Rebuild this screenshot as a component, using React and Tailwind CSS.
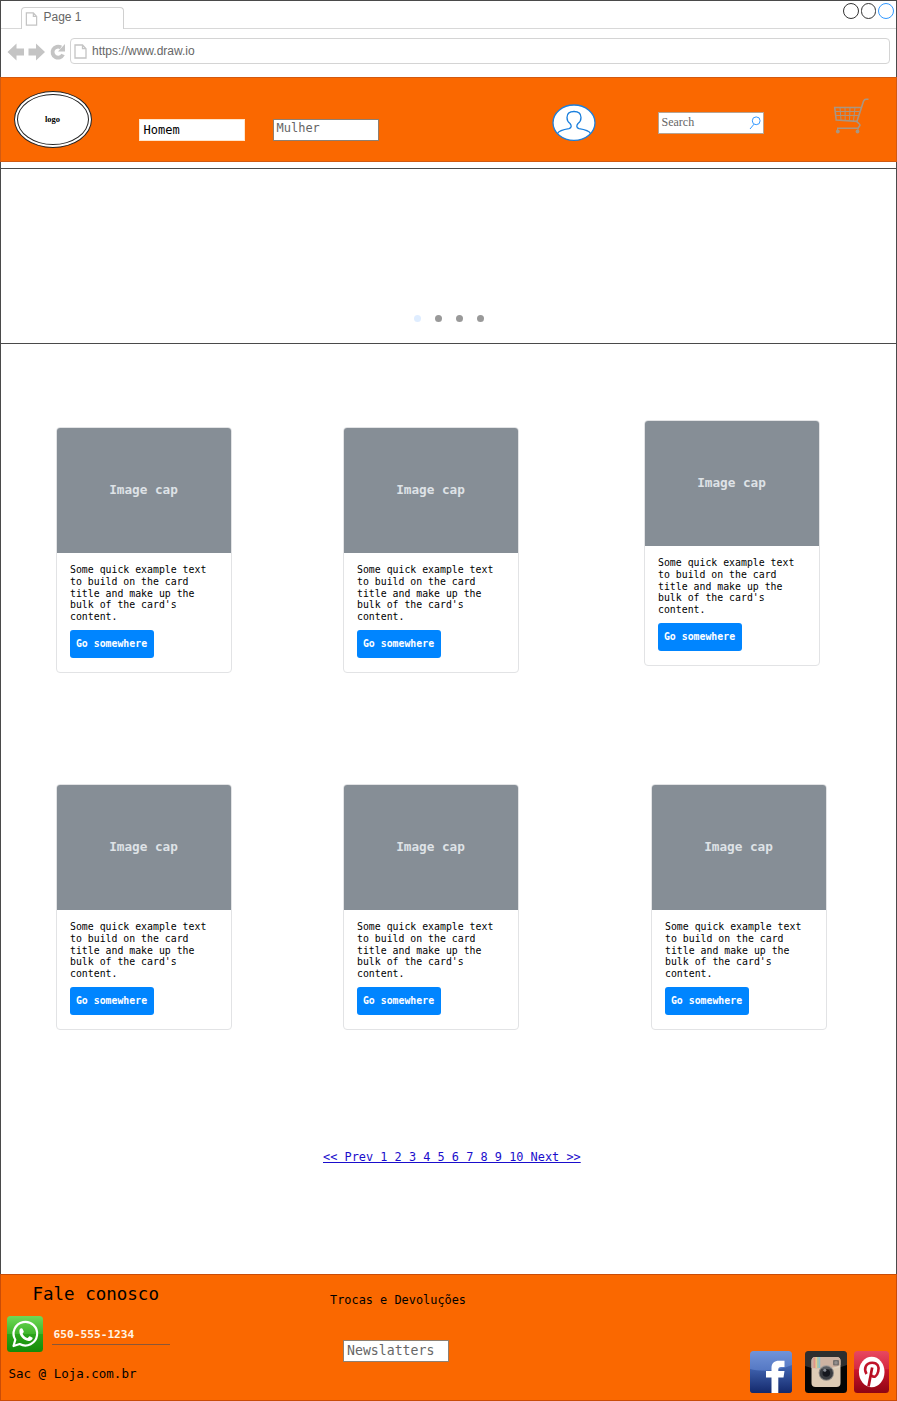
import React from "react";

const MONO = "font-['DejaVu_Sans_Mono','Liberation_Mono',monospace]";

function PageIcon({ className }) {
  return (
    <svg className={className} viewBox="0 0 13 15" fill="none" stroke="#c4c4c4" strokeWidth="1.3">
      <path d="M1 1H8.5L12 4.7V14H1Z M8.5 1V4.7H12" />
    </svg>
  );
}

function BrowserBar() {
  return (
    <div className="h-[77px] border-x border-t border-[#4a4a4a] bg-white font-['Liberation_Sans',sans-serif] text-[12px] text-[#666]">
      <div className="flex h-[28px] pt-[6px]">
        <div className="w-[20px] border-b border-[#d8d8d8]" />
        <div className="flex w-[103px] rounded-t-[4px] border-x border-t border-[#d0d0d0] pl-[3px]">
          <PageIcon className="mt-[4px] h-[14px] w-[13px]" />
          <span className="ml-[5.500px] mt-[1px] leading-[17px]">Page 1</span>
        </div>
        <div className="-mt-[6px] flex flex-1 justify-end gap-[2px] border-b border-[#d8d8d8] pr-[2.500px] pt-[2px]">
          <span className="size-[15.5px] rounded-full border border-[#333]" />
          <span className="size-[15.5px] rounded-full border border-[#333]" />
          <span className="size-[15.5px] rounded-full border border-[#3399ff]" />
        </div>
      </div>
      <div className="flex h-[48px] pl-[6px] pt-[9px]">
        <svg className="mt-[4px] h-[19px] w-[60px] shrink-0" viewBox="0 0 60 19" fill="#c4c4c4">
          <path d="M0.5 10L9.5 1.500V6.500H17V13.500H9.5V18.500Z" />
          <path d="M38 10L29 1.500V6.500H21.500V13.500H29V18.500Z" />
          <path d="M56 12.500A5.500 5.500 0 1 1 54 5.500" fill="none" stroke="#c4c4c4" strokeWidth="3.900" />
          <path d="M58 2V9.500H51Z" />
        </svg>
        <div className="ml-[3px] flex h-[26px] w-[820px] rounded-[4px] border border-[#d4d4d4] pl-[3px]">
          <PageIcon className="mt-[5px] h-[15px] w-[13px]" />
          <span className="ml-[5px] leading-[25px]">https://www.draw.io</span>
        </div>
      </div>
    </div>
  );
}

function UserIcon() {
  return (
    <svg className="ml-[173px] mt-[26px] h-[38px] w-[44px]" viewBox="0 0 44 38" fill="#fff" stroke="#1a7fdd" strokeWidth="1.3">
      <ellipse cx="22" cy="18.700" rx="21" ry="17.700" />
      <path fill="none" d="M5.500 29.500C7 26.500 12 25.500 17 24.700C20 23.500 19.500 21.500 18 19.500C15.800 18 15 16 15 13.500C15 9.500 18 7.500 22 7.500S29 9.500 29 13.500C29 16 28.200 18 26 19.500C24.500 21.500 24 23.500 27 24.700C32 25.500 37 26.500 38.500 29.500" />
    </svg>
  );
}

function CartIcon() {
  return (
    <svg className="ml-[69px] mt-[20px] h-[37px] w-[36px]" viewBox="0 0 36 37" fill="none" stroke="#a89683" strokeWidth="1.600">
      <path d="M35.500 1.200H33C31.500 1.200 31 2 30.500 3.200L24 23.300L3.200 22L1.700 9.500H28" />
      <path d="M23.500 23.300C25 25 27.500 26 27 27.500L25 30.300H4" />
      <path strokeWidth="1" d="M2.200 13.500H26.500M2.800 17.500H25.500M7 9.500L8 22M12 9.500L12.200 22.500M17 9.500L16.500 22.500M22 9.500L20.500 23M4.500 30V33M25 30V33" />
      <circle cx="4.800" cy="33.500" r="1.900" fill="#a89683" stroke="none" />
      <circle cx="24.500" cy="33.500" r="1.900" fill="#a89683" stroke="none" />
    </svg>
  );
}

function Header() {
  return (
    <header className={`flex h-[85px] border border-[#d25a12] bg-[#fa6800] pl-[13px] ${MONO}`}>
      <div className="mt-[13px] h-[57px] w-[78px] rounded-[50%] border border-[#222] bg-white p-[2px]">
        <div className="flex h-full items-center justify-center rounded-[50%] border border-[#222] pr-px font-['Liberation_Serif',serif] text-[8.500px] font-bold text-black">
          logo
        </div>
      </div>
      <div className="ml-[47px] mt-[41px] h-[22px] w-[106px] border border-[#ffe6cc] bg-white pl-[3.500px] text-[12px] leading-[21px] text-black">
        Homem
      </div>
      <div className="ml-[28px] mt-[41px] h-[22px] w-[106px] border border-[#8f7f70] bg-white pl-[2.500px] text-[12px] leading-[17px] text-[#666]">
        Mulher
      </div>
      <UserIcon />
      <div className="ml-[62px] mt-[34px] flex h-[22px] w-[106px] justify-between border border-[#b5a494] bg-white pl-[2.500px] pr-[2px] font-['Liberation_Serif',serif] text-[12px] leading-[19px] text-[#666]">
        Search
        <svg className="mt-[3px] h-[14px] w-[12px]" viewBox="0 0 12 14" fill="none" stroke="#3399ff" strokeWidth="1">
          <circle cx="7.200" cy="4.800" r="3.900" />
          <path d="M5 8.200L1 13" />
        </svg>
      </div>
      <CartIcon />
    </header>
  );
}

function Card({ className = "" }) {
  return (
    <article className={`h-[246px] w-[176px] shrink-0 rounded-[4px] border border-[#e2e3e5] bg-white ${MONO} ${className}`}>
      <div className="flex h-[125px] items-center justify-center rounded-t-[3px] bg-[#868e96] pb-[2px] pr-px text-[12.700px] font-bold text-[#dee2e6]">
        Image cap
      </div>
      <div className="pl-[13px] pt-[11px]">
        <p className="text-[9.850px] leading-[11.750px] text-black">
          Some quick example text
          <br />
          to build on the card
          <br />
          title and make up the
          <br />
          bulk of the card's
          <br />
          content.
        </p>
        <button className="mt-[7px] block h-[28px] w-[84px] rounded-[3px] bg-[#0085ff] pr-px text-[9.850px] font-bold leading-[27px] text-white">
          Go somewhere
        </button>
      </div>
    </article>
  );
}

function WhatsappIcon() {
  return (
    <svg className="h-[36px] w-[36px]" viewBox="0 0 36 36">
      <defs>
        <linearGradient id="wa" x2="0" y2="1">
          <stop offset="0" stopColor="#6fd957" />
          <stop offset="0.500" stopColor="#3fb52c" />
          <stop offset="0.510" stopColor="#2ba51a" />
          <stop offset="1" stopColor="#158a08" />
        </linearGradient>
      </defs>
      <rect width="36" height="36" rx="3.500" fill="url(#wa)" />
      <path fill="none" stroke="#fff" strokeWidth="2.200" strokeLinejoin="round" d="M6.500 30L8.300 23.800A11.800 11.800 0 1 1 12.700 28Z" />
      <path fill="#fff" d="M12.500 14C13 12.300 14.800 11.800 15.500 12.800L16.800 15.600C17 16.400 15.700 17.200 15.600 17.700C16.600 19.900 18.500 21.300 20.500 22C21.300 21.700 22 20 22.800 20.200L25.600 21.700C26 23.500 23.500 25.200 21.500 25C16.500 24.300 11.600 19.500 12.500 14Z" />
    </svg>
  );
}

function FacebookIcon() {
  return (
    <svg className="h-[42px] w-[42px]" viewBox="0 0 42 42">
      <defs>
        <linearGradient id="fb" x2="0" y2="1">
          <stop offset="0" stopColor="#7193d8" />
          <stop offset="0.450" stopColor="#5679c4" />
          <stop offset="1" stopColor="#152c72" />
        </linearGradient>
        <linearGradient id="fbd" x2="0" y2="1">
          <stop offset="0" stopColor="#4468b5" />
          <stop offset="1" stopColor="#14296c" />
        </linearGradient>
      </defs>
      <rect width="42" height="42" rx="3.500" fill="url(#fb)" />
      <path d="M0 18C12 21 28 20 42 14V38.500Q42 42 38.500 42H3.500Q0 42 0 38.500Z" fill="url(#fbd)" />
      <path fill="#fff" d="M21.500 42V26.500H16V20H21.500V17C21.500 12 24.500 9.800 29 9.800H34.500V16H31C29 16 28.300 17 28.300 18.500V20H34.500L33.500 26.500H28.300V42Z" />
    </svg>
  );
}

function InstagramIcon() {
  return (
    <svg className="ml-[13px] h-[42px] w-[42px]" viewBox="0 0 42 42">
      <rect width="42" height="42" rx="3.500" fill="#050505" />
      <rect x="6.500" y="6" width="29" height="30" rx="4" fill="#ddcbb5" />
      <path d="M6.500 17V10Q6.500 6 10.500 6H31.500Q35.500 6 35.500 10V14C28 18 16 18 6.500 17Z" fill="#c4a490" />
      <path fill="#d98072" d="M8.500 6.500H10.500V17H8.500Z" />
      <path fill="#e5bd78" d="M10.500 6H12.200V17H10.500Z" />
      <path fill="#8cc29a" d="M12.200 6H13.700V17H12.200Z" />
      <path fill="#79b5c5" d="M13.700 6H15.200V17H13.700Z" />
      <rect x="28" y="9" width="6" height="5.500" rx="1" fill="#5a5350" />
      <circle cx="31" cy="11.700" r="1.700" fill="#7d7876" />
      <circle cx="21.300" cy="22" r="7.700" fill="#898582" />
      <circle cx="21.300" cy="22" r="6.700" fill="#393b40" />
      <circle cx="21.300" cy="22" r="3.800" fill="#15171e" />
      <circle cx="19.800" cy="19.300" r="1.500" fill="#878b94" />
      <path d="M0 15V3.500Q0 0 3.500 0H38.500Q42 0 42 3.500V14C30 19 14 20 0 15Z" fill="#fff" opacity="0.170" />
    </svg>
  );
}

function PinterestIcon() {
  return (
    <svg className="ml-[7px] h-[42px] w-[35px]" viewBox="0 0 35 42">
      <defs>
        <linearGradient id="pin" x2="0" y2="1">
          <stop offset="0" stopColor="#e84860" />
          <stop offset="0.420" stopColor="#d62a42" />
          <stop offset="0.450" stopColor="#c9152c" />
          <stop offset="1" stopColor="#8e0413" />
        </linearGradient>
      </defs>
      <rect width="35" height="42" rx="3.500" fill="url(#pin)" />
      <ellipse cx="17.700" cy="21" rx="12.800" ry="15.200" fill="#fff" />
      <path fill="none" stroke="#c0142a" strokeWidth="2.600" d="M12.500 23C9.500 18 11.500 11.700 18.200 11.700C23.800 11.700 25.500 16 24.200 20.500C23 25.500 20 27 17.500 24.500" />
      <path fill="none" stroke="#b30d20" strokeWidth="2.700" d="M18.200 16.500L14.500 35.500" />
    </svg>
  );
}

function Footer() {
  return (
    <footer className={`flex h-[127px] border border-[#c94c08] bg-[#fa6800] text-black ${MONO}`}>
      <div className="w-[329px]">
        <h2 className="ml-[31.500px] mt-[7px] text-[17.500px] leading-[24px]">Fale conosco</h2>
        <div className="ml-[6px] mt-[10px] flex">
          <WhatsappIcon />
          <div className="ml-[9px] mt-[8px] h-[21px] w-[118px] border-b border-[#8a5738] pl-[1.500px] text-[11.200px] font-bold leading-[21px] text-[#fff4e6]">
            650-555-1234
          </div>
        </div>
        <p className="ml-[7.500px] mt-[14px] text-[12.500px] leading-[16px]">Sac @ Loja.com.br</p>
      </div>
      <div className="w-[419px]">
        <p className="mt-[17px] text-[11.900px] leading-[16px]">Trocas e Devoluções</p>
        <div className="ml-[13px] mt-[32px] h-[22px] w-[106px] border border-[#8f7f70] bg-white pl-[3px] text-[13.200px] leading-[19px] text-[#666]">
          Newslatters
        </div>
      </div>
      <div className="mt-[76px] flex shrink-0 pl-[1px]">
        <FacebookIcon />
        <InstagramIcon />
        <PinterestIcon />
      </div>
    </footer>
  );
}

export default function App() {
  return (
    <div className="flex h-[1401px] w-[897px] flex-col bg-white">
      <BrowserBar />
      <Header />
      <div className="h-[6px] border-x border-[#4a4a4a]" />
      <section className="flex h-[176px] items-end justify-center gap-[14px] border border-[#4a4a4a] pb-[21px]">
        <span className="size-[7px] rounded-full bg-[#dfedff]" />
        <span className="size-[7px] rounded-full bg-[#999]" />
        <span className="size-[7px] rounded-full bg-[#999]" />
        <span className="size-[7px] rounded-full bg-[#999]" />
      </section>
      <main className="h-[930px] border-x border-[#4a4a4a]">
        <div className="flex pl-[55px] pt-[76px]">
          <Card className="mt-[7px]" />
          <Card className="ml-[111px] mt-[7px]" />
          <Card className="ml-[125px]" />
        </div>
        <div className="flex pl-[55px] pt-[111px]">
          <Card />
          <Card className="ml-[111px]" />
          <Card className="ml-[132px]" />
        </div>
        <nav className={`ml-[322px] mt-[119px] whitespace-nowrap text-[11.900px] leading-[16px] text-[#1a0dcc] ${MONO}`}>
          <a className="underline">{"<< Prev 1 2 3 4 5 6 7 8 9 10 Next >>"}</a>
        </nav>
      </main>
      <Footer />
    </div>
  );
}
